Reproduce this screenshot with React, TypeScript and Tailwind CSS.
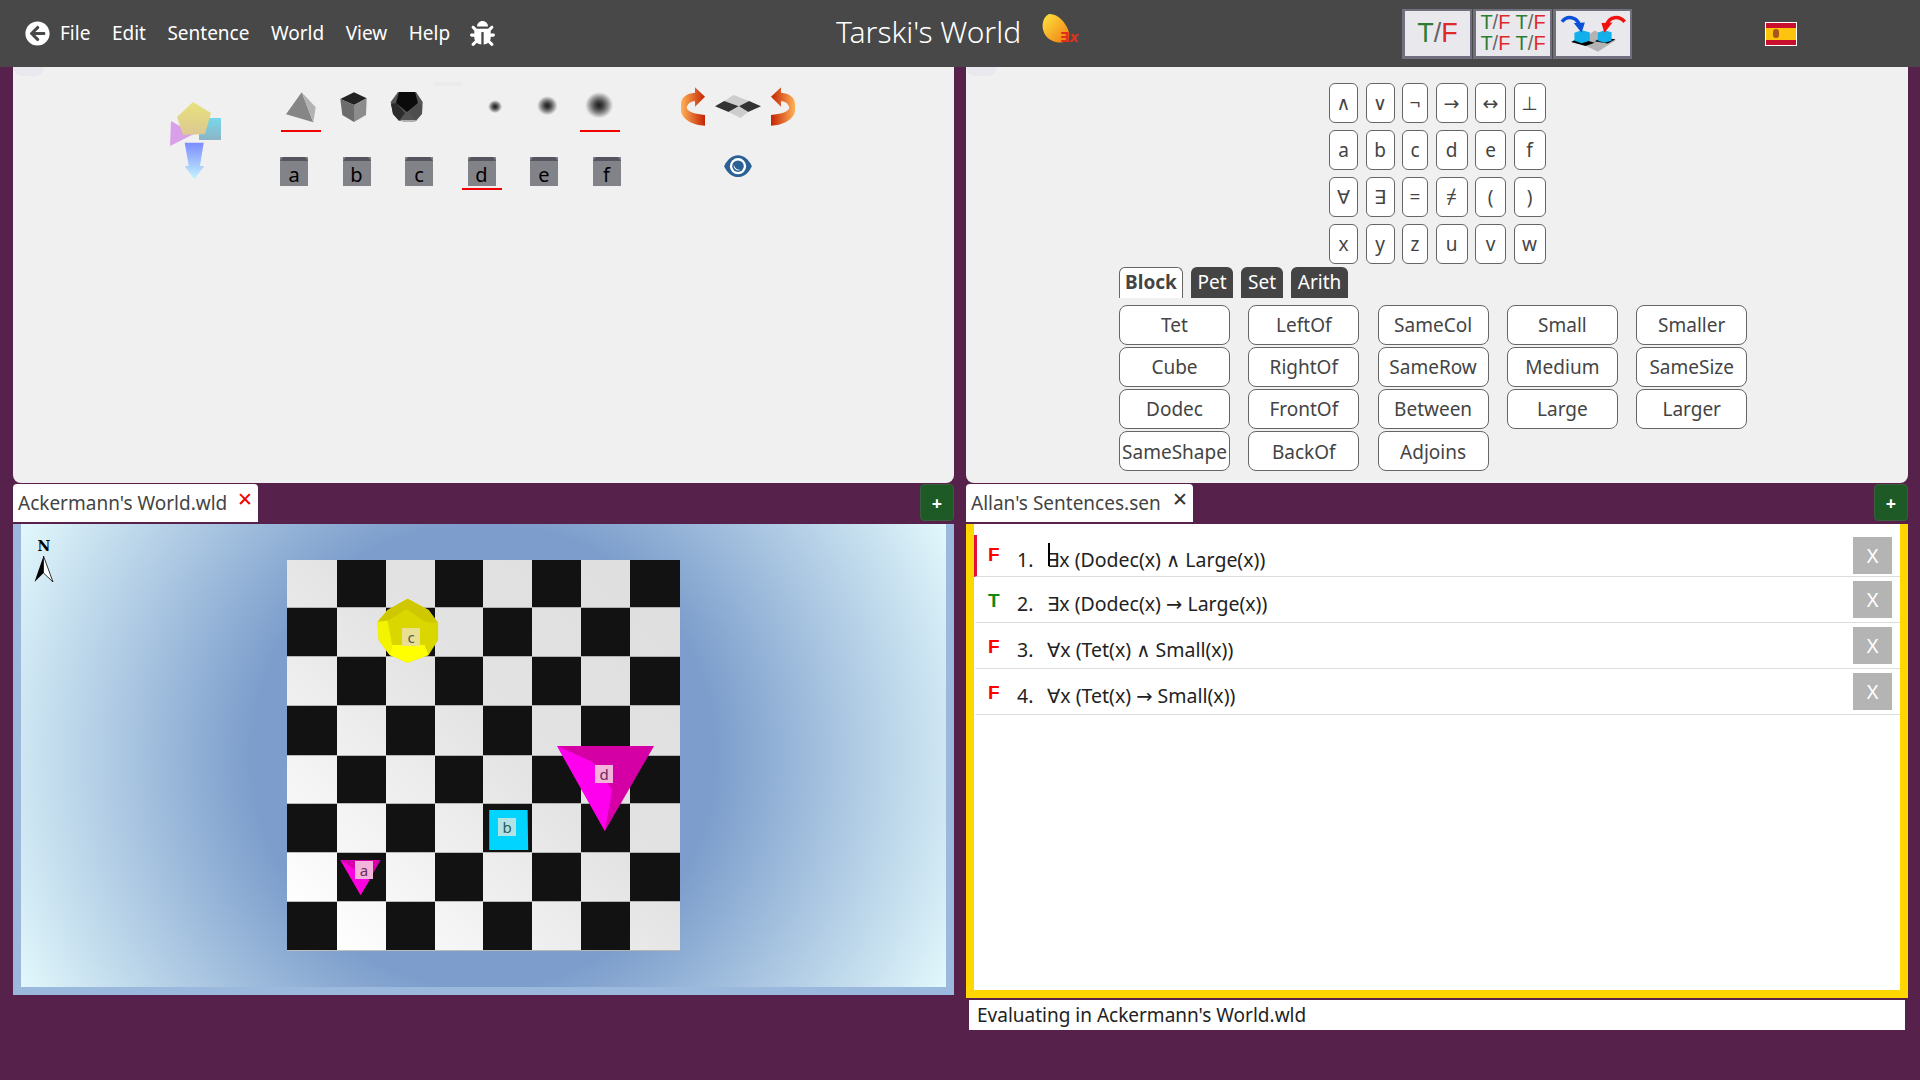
import { FaArrowCircleLeft, FaBug } from "react-icons/fa";

const navItems = ["File", "Edit", "Sentence", "World", "View", "Help"];

const keyRows = [
  ["∧", "∨", "¬", "→", "↔", "⊥"],
  ["a", "b", "c", "d", "e", "f"],
  ["∀", "∃", "=", "≠", "(", ")"],
  ["x", "y", "z", "u", "v", "w"],
];

const predicates = [
  "Tet", "LeftOf", "SameCol", "Small", "Smaller",
  "Cube", "RightOf", "SameRow", "Medium", "SameSize",
  "Dodec", "FrontOf", "Between", "Large", "Larger",
  "SameShape", "BackOf", "Adjoins",
];

const sentences = [
  { value: "F", text: "∃x (Dodec(x) ∧ Large(x))" },
  { value: "T", text: "∃x (Dodec(x) → Large(x))" },
  { value: "F", text: "∀x (Tet(x) ∧ Small(x))" },
  { value: "F", text: "∀x (Tet(x) → Small(x))" },
];

const rowHeights = [
  "h-[48.3px]", "h-[49px]", "h-[49px]", "h-[49.7px]",
  "h-[48.3px]", "h-[49px]", "h-[49px]", "h-[48.4px]",
];

function TrueFalse({ className }: { className: string }) {
  return (
    <span className={className}>
      <span className="text-[#2e7d32]">T</span>
      <span className="text-[#666]">/</span>
      <span className="text-[#e02828]">F</span>
    </span>
  );
}

function ToolButton({ children, className }: { children: React.ReactNode; className: string }) {
  return (
    <div className={`flex h-[50px] flex-col items-center justify-center border-t-2 border-r-2 border-b-[3px] border-l-[3px] border-[#6f6f7d] bg-[#e9e9ed] font-['Liberation_Sans',sans-serif] ${className}`}>
      {children}
    </div>
  );
}

function Header() {
  return (
    <header className="flex h-[67px] shrink-0 items-center bg-[#484848] text-white">
      <div className="flex w-[836px] items-center pl-[25px]">
        <FaArrowCircleLeft className="mr-[10px] h-[25px] w-[25px]" />
        <nav className="flex gap-[21.5px] text-[19px]">
          {navItems.map((item) => (
            <span key={item}>{item}</span>
          ))}
        </nav>
        <FaBug className="ml-[20px] h-[25px] w-[25px]" />
      </div>
      <div className="w-[185px] -translate-y-[2px] text-[30px] font-light whitespace-nowrap">Tarski's World</div>
      <svg className="ml-[20px] h-[34px] w-[42px] -translate-y-[3px]" viewBox="0 0 42 34">
        <defs>
          <linearGradient id="logoBlob" x1="0" y1="0" x2="1" y2="1">
            <stop offset="0" stopColor="#ffe640" />
            <stop offset="1" stopColor="#f07a10" />
          </linearGradient>
        </defs>
        <path d="M8 0 C15 0 20 4 24 10 C28 16 30 22 26 26 C20 31 10 28 5 22 C0 16 0 4 8 0 Z" fill="url(#logoBlob)" />
        <text x="19" y="28" fontSize="14" fontWeight="700" fontStyle="italic" fill="#e0301a" fontFamily="DejaVu Sans">∃x</text>
      </svg>
      <div className="ml-[319px] flex gap-px">
        <ToolButton className="w-[70px]">
          <TrueFalse className="text-[27px] leading-none" />
        </ToolButton>
        <ToolButton className="w-[79px] text-[20px] leading-[21px] whitespace-nowrap">
          <div>
            <TrueFalse className="" /> <TrueFalse className="" />
          </div>
          <div>
            <TrueFalse className="" /> <TrueFalse className="" />
          </div>
        </ToolButton>
        <ToolButton className="w-[79px]">
          <svg className="h-[46px] w-[76px]" viewBox="520 25 230 138">
            <polygon points="640,85 705,115 650,150 590,120" fill="#b4b4b4" />
            <polygon points="568,120 590,108 640,122 612,132" fill="#000" />
            <polygon points="640,118 660,108 704,112 680,125" fill="#000" />
            <polygon points="578,92 600,84 625,90 625,116 600,124 578,116" fill="#12b0ea" />
            <polygon points="650,92 670,84 692,90 692,116 670,122 650,116" fill="#12b0ea" />
            <path d="M540 58 C555 38 585 42 592 66" fill="none" stroke="#0a50d8" strokeWidth="11" />
            <polygon points="576,62 610,60 600,92" fill="#0a50d8" />
            <path d="M732 58 C715 38 685 42 678 66" fill="none" stroke="#f01010" strokeWidth="11" />
            <polygon points="661,62 695,60 670,92" fill="#f01010" />
          </svg>
        </ToolButton>
      </div>
      <div className="ml-[133px] flex h-[24px] w-[32px] flex-col border border-white">
        <div className="h-[5px] bg-[#c8102e]" />
        <div className="flex flex-1 items-center bg-[#fcc40c] pl-[7px]">
          <div className="h-[9px] w-[6px] rounded-sm bg-[#a8541c]" />
        </div>
        <div className="h-[5px] bg-[#c8102e]" />
      </div>
    </header>
  );
}

function BlockTile({ letter, selected }: { letter: string; selected?: boolean }) {
  return (
    <div className="flex w-[40px] flex-col items-center">
      <div className="h-[29px] w-[28px] bg-[#828289] text-center text-[20px] text-black">
        <div className="h-0 w-[28px] border-x-[3px] border-b-[4px] border-x-transparent border-b-[#55555f]" />
        <div className="pt-[2px] leading-[23px]">{letter}</div>
      </div>
      <div className={`mt-[2px] h-[2px] w-full ${selected ? "bg-[#f00000]" : ""}`} />
    </div>
  );
}

function ShapeSlot({ children, selected }: { children: React.ReactNode; selected?: boolean }) {
  return (
    <div className="flex w-[40px] flex-col items-center">
      <div className="flex h-[32px] w-full items-center justify-center">{children}</div>
      <div className={`mt-[7px] h-[2px] w-full ${selected ? "bg-[#f00000]" : ""}`} />
    </div>
  );
}

function Sphere({ className }: { className: string }) {
  return (
    <div className={`rounded-[50%] bg-[radial-gradient(closest-side_at_47%_44%,#1c1c1c_0%,#444_30%,#888_60%,#ccc_85%,#f0f0f000_100%)] ${className}`} />
  );
}

function PaletteLogo() {
  return (
    <svg className="mt-[35px] h-[78px] w-[52px] shrink-0" viewBox="170 102 52 78">
      <defs>
        <linearGradient id="pent" x1="0" y1="0" x2="0" y2="1">
          <stop offset="0" stopColor="#e8e27c" />
          <stop offset="1" stopColor="#dcc892" />
        </linearGradient>
        <linearGradient id="sq" x1="0" y1="0" x2="0" y2="1">
          <stop offset="0" stopColor="#76d8ea" />
          <stop offset="1" stopColor="#8cb4c6" />
        </linearGradient>
        <linearGradient id="drop" x1="0" y1="0" x2="0" y2="1">
          <stop offset="0" stopColor="#7c8cff" />
          <stop offset="1" stopColor="#c4f4ff" />
        </linearGradient>
      </defs>
      <rect x="199" y="118" width="22" height="22" fill="url(#sq)" />
      <polygon points="171,121 194,134 170,146" fill="#d8a0e8" />
      <polygon points="193,102 211,113 205,134 183,135 177,117" fill="url(#pent)" />
      <polygon points="184.7,142.7 203.7,142.7 200,166 204.3,166 194.3,179.3 184.7,166 188.7,166" fill="url(#drop)" />
    </svg>
  );
}

function WorldPalette() {
  return (
    <div className="relative flex h-[416px] w-[941px] rounded-b-lg bg-[#f0f0f0] pl-[157px]">
      <div className="absolute top-0 left-0 h-[9px] w-[31px] rounded-b-full bg-[#e8e8ee]" />
      <div className="absolute top-[15px] left-[420px] h-[4px] w-[30px] bg-[#ebebeb]" />
      <PaletteLogo />
      <div className="ml-[52px] shrink-0">
        <div className="mt-[24px] flex pl-[7px]">
          <div className="flex gap-[13px]">
            <ShapeSlot selected>
              <svg className="h-[32px] w-[40px]" viewBox="281 91 40 32">
                <polygon points="301.7,92.3 313.3,122.3 286,114.3" fill="#868686" />
                <polygon points="301.7,92.3 315.7,107.3 313.3,122.3" fill="#b2b2b2" />
              </svg>
            </ShapeSlot>
            <ShapeSlot>
              <svg className="h-[32px] w-[40px]" viewBox="334 91 40 32">
                <polygon points="354,92.3 366.7,98.3 354,105 340.3,99" fill="#222" />
                <polygon points="340.3,99 354,105 354,122 342.3,115" fill="#6c6c6c" />
                <polygon points="354,105 366.7,98.3 366,115 354,122" fill="#8c8c8c" />
              </svg>
            </ShapeSlot>
            <ShapeSlot>
              <svg className="h-[32px] w-[40px]" viewBox="387 91 40 32">
                <polygon points="398,92 416,92 422.7,102 422,114 416,121 400,121 393,114 390.7,102" fill="#555" />
                <polygon points="399,92 415,92 418,103 407,112 396,103" fill="#0b0b0b" />
                <polygon points="391,104 396,103 405,113 399,121 393,114" fill="#2b2b2b" />
                <polygon points="418,103 422,106 421,114 415,120 409,113" fill="#4d4d4d" />
                <polygon points="400,120 416,120 415,122 403,122" fill="#b0b0b0" />
              </svg>
            </ShapeSlot>
          </div>
          <div className="ml-[48px] flex gap-[12.5px]">
            <ShapeSlot>
              <Sphere className="h-[15px] w-[15px]" />
            </ShapeSlot>
            <ShapeSlot>
              <Sphere className="h-[22px] w-[22px]" />
            </ShapeSlot>
            <ShapeSlot selected>
              <Sphere className="h-[30px] w-[30px]" />
            </ShapeSlot>
          </div>
        </div>
        <div className="mt-[25px] flex gap-[22.5px]">
          <BlockTile letter="a" />
          <BlockTile letter="b" />
          <BlockTile letter="c" />
          <BlockTile letter="d" selected />
          <BlockTile letter="e" />
          <BlockTile letter="f" />
        </div>
      </div>
      <div className="ml-[54px] flex flex-col items-center">
        <div className="mt-[20px] flex items-center">
          <RotateArrow className="" />
          <svg className="mx-[10px] h-[23px] w-[46px]" viewBox="165 80 135 67">
            <polygon points="220,80 265,97 235,113 192,97" fill="#cdcdcd" />
            <polygon points="192,97 235,113 205,130 165,113" fill="#333" />
            <polygon points="265,97 300,113 262,130 235,113" fill="#333" />
            <polygon points="235,113 262,130 240,147 205,130" fill="#cdcdcd" />
          </svg>
          <RotateArrow className="-scale-x-100" />
        </div>
        <svg className="mt-[29px] h-[22px] w-[28px]" viewBox="195 255 82 65">
          <path d="M195 288 C215 245 257 245 277 288 C257 331 215 331 195 288 Z" fill="#2a6094" />
          <circle cx="236" cy="288" r="24" fill="#fff" />
          <circle cx="236" cy="288" r="17" fill="#2a6094" />
          <path d="M224 284 A13 13 0 0 0 244 298 A16 16 0 0 1 224 284 Z" fill="#fff" />
        </svg>
      </div>
    </div>
  );
}

function RotateArrow({ className }: { className: string }) {
  return (
    <svg className={`h-[39px] w-[24px] ${className}`} viewBox="63 50 72 115">
      <defs>
        <linearGradient id="rot" x1="0" y1="0" x2="1" y2="0">
          <stop offset="0" stopColor="#ffb258" />
          <stop offset="1" stopColor="#c42404" />
        </linearGradient>
      </defs>
      <path
        d="M135 133 C105 130 85 125 80 112 C82 100 92 92 105 92 L105 108 L135 78 L105 50 L105 66 C80 68 63 80 63 100 L63 118 C63 145 100 165 135 165 Z"
        fill="url(#rot)"
      />
    </svg>
  );
}

function LogicPalette() {
  return (
    <div className="relative h-[416px] w-[942px] rounded-b-lg bg-[#f0f0f0] pt-[16px] text-[19px] text-[#444]">
      <div className="absolute top-0 left-0 h-[9px] w-[31px] rounded-b-full bg-[#e8e8ee]" />
      <div className="ml-[363px] grid w-fit grid-cols-[29px_29px_26px_32px_31px_32px] gap-[7.5px]">
        {keyRows.flat().map((key, i) => (
          <div key={i} className="flex h-[39.5px] items-center justify-center rounded-md border border-[#666] bg-white">
            {key}
          </div>
        ))}
      </div>
      <div className="mt-[3px] ml-[153px] flex gap-[8px]">
        <div className="flex h-[31px] w-[64px] items-center justify-center rounded-t-md border border-b-0 border-[#666] bg-white font-bold">Block</div>
        <div className="flex h-[31px] w-[42px] items-center justify-center rounded-t-md bg-[#444] text-white">Pet</div>
        <div className="flex h-[31px] w-[42px] items-center justify-center rounded-t-md bg-[#444] text-white">Set</div>
        <div className="flex h-[31px] w-[57px] items-center justify-center rounded-t-md bg-[#444] text-white">Arith</div>
      </div>
      <div className="mt-[7px] ml-[153px] grid w-fit grid-cols-[111px_111px_111px_111px_111px] gap-x-[18.3px] gap-y-[2.3px]">
        {predicates.map((name) => (
          <div key={name} className="flex h-[40px] items-center justify-center rounded-lg border border-[#666] bg-white pt-px whitespace-nowrap">
            {name}
          </div>
        ))}
      </div>
    </div>
  );
}

function Board() {
  return (
    <div className="relative h-[391px] w-[393px] bg-[linear-gradient(to_top_right,#ffffff_5%,#e3e3e3_55%,#dedede_100%)]">
      <div className="flex h-full flex-col">
        {rowHeights.map((h, r) => (
          <div key={r} className={`grid grid-cols-[50.1px_48.5px_49px_48.5px_49.1px_48.4px_49px_50px] border-b border-[#8888] ${h}`}>
            {Array.from({ length: 8 }).map((_, c) => (
              <div key={c} className={(r + c) % 2 === 1 ? "bg-[#121212]" : ""} />
            ))}
          </div>
        ))}
      </div>
      <svg className="absolute inset-0 h-full w-full" viewBox="287.4 560 393 391">
        <polygon points="408,598.7 429,610 438.5,623 438.5,640 429,655 408,662.7 390,655 379,640 378,621.7 388,610" fill="#d9d600" />
        <polygon points="408,598.7 429,610 438.5,623 426,622 407,609 388,620.7 378,621.7 388,610" fill="#cfc800" />
        <polygon points="378,621.7 388,620.7 392.5,645 390,655 379,640" fill="#f4f400" />
        <polygon points="392.5,645 425,645 429,655 408,662.7 390,655" fill="#ffff00" />
        <polygon points="557.5,746 654.4,746 605.3,831" fill="#d400a6" />
        <polygon points="557.5,746 593,762 612.6,790 605.3,831" fill="#ff00ee" />
        <polygon points="489.6,810 528,810 528.6,850 489.6,850" fill="#00d4ff" />
        <polygon points="340.8,860 381,860 361,895" fill="#d800ac" />
        <polygon points="340.8,860 356,870 370,880 361,895" fill="#ff00e0" />
      </svg>
      <BlockLabel className="top-[68px] left-[115px] bg-[#e8e090] text-[#555]" letter="c" />
      <BlockLabel className="top-[205px] left-[308px] bg-[#f2b4da] text-[#6a2a5a]" letter="d" />
      <BlockLabel className="top-[258px] left-[211px] bg-[#b2e2e4] text-[#2a5a60]" letter="b" />
      <BlockLabel className="top-[301px] left-[68px] bg-[#f2b4da] text-[#6a2a5a]" letter="a" />
    </div>
  );
}

function BlockLabel({ letter, className }: { letter: string; className: string }) {
  return (
    <div className={`absolute flex h-[18px] w-[18px] items-center justify-center text-[15px] ${className}`}>
      {letter}
    </div>
  );
}

function WorldView() {
  return (
    <div className="h-[471px] w-[941px] bg-[#9ab9dc] px-[8px] pb-[8px]">
      <div className="relative flex h-[463px] items-center justify-center bg-[radial-gradient(circle,#7d9ecc_45%,#e2f8fc_100%)]">
        <Board />
        <div className="absolute top-[12px] left-[13px] flex w-[20px] flex-col items-center">
          <span className="font-['DejaVu_Serif',serif] text-[14px] leading-[20px] font-bold text-black">N</span>
          <svg className="h-[26px] w-[20px]" viewBox="0 0 20 26">
            <polygon points="9.5,0 0.5,26 9.5,17" fill="#000" />
            <polygon points="9.5,0 19,26 9.5,17" fill="#fff" stroke="#000" strokeWidth="0.8" />
          </svg>
        </div>
      </div>
    </div>
  );
}

function AddButton() {
  return (
    <div className="flex h-[37px] w-[34px] items-center justify-center rounded-sm border border-[#3c5c3c] bg-[#1d5a25] text-[18px] leading-none font-bold text-white">
      +
    </div>
  );
}

function TabRow({ title, closeClass, tabWidth }: { title: string; closeClass: string; tabWidth: string }) {
  return (
    <div className="flex h-[41px] items-start justify-between pt-px">
      <div className={`flex h-[38px] items-center justify-between rounded-t-sm bg-white pr-[5px] pl-[5px] text-[19px] text-[#444] ${tabWidth}`}>
        <span className="whitespace-nowrap">{title}</span>
        <span className={`-translate-y-[4px] text-[19px] font-bold ${closeClass}`}>✕</span>
      </div>
      <AddButton />
    </div>
  );
}

function SentenceRow({ value, text, index, active }: { value: string; text: string; index: number; active: boolean }) {
  return (
    <div className={`flex items-center border-b border-b-[#ddd] border-l-[3px] ${active ? "h-[42px] border-l-[#e0103c]" : "h-[46px] border-l-transparent"}`}>
      <span className={`w-[40px] pl-[11px] font-['Liberation_Sans',sans-serif] text-[19px] font-bold ${active ? "" : "pt-[3px]"} ${value === "T" ? "text-[#0a8a14]" : "text-[#ff0000]"}`}>
        {value}
      </span>
      <span className="w-[30px] pt-[8px] text-[19.5px] text-[#222]">{index}.</span>
      <span className="relative flex-1 pt-[8px] text-[19.5px] text-[#222]">
        {active && <span className="absolute top-[6px] left-px h-[23px] w-[2px] bg-black" />}
        {text}
      </span>
      <div className="mr-[8px] flex h-[37px] w-[39px] items-center justify-center bg-[#b4b4b4] text-[20px] text-white">X</div>
    </div>
  );
}

function SentenceList() {
  return (
    <div className="h-[474px] w-[942px] border-x-8 border-b-8 border-[#ffd700] bg-white pt-[11px]">
      {sentences.map((s, i) => (
        <SentenceRow key={i} index={i + 1} value={s.value} text={s.text} active={i === 0} />
      ))}
    </div>
  );
}

export default function App() {
  return (
    <div className="flex h-[1080px] w-[1920px] flex-col overflow-hidden bg-[#56224c] font-['Noto_Sans','DejaVu_Sans',sans-serif]">
      <Header />
      <div className="flex gap-[12px] pl-[13px]">
        <div className="w-[941px]">
          <WorldPalette />
          <TabRow title="Ackermann's World.wld" closeClass="text-[#f00000]" tabWidth="w-[245px]" />
          <WorldView />
        </div>
        <div className="w-[942px]">
          <LogicPalette />
          <TabRow title="Allan's Sentences.sen" closeClass="text-[#333]" tabWidth="w-[227px]" />
          <SentenceList />
          <div className="mx-[3px] mt-[2px] flex h-[30px] items-center bg-white pl-[8px] text-[19px] text-[#222]">
            Evaluating in Ackermann's World.wld
          </div>
        </div>
      </div>
    </div>
  );
}
